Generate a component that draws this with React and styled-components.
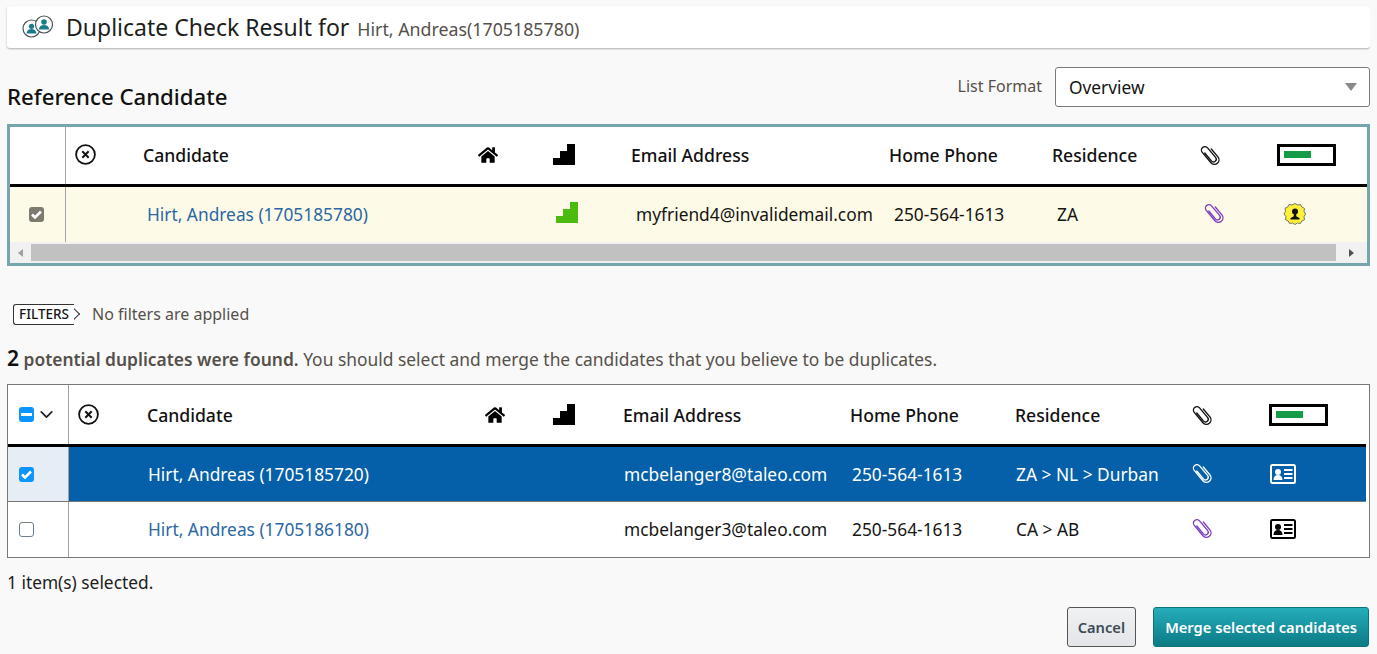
import React from 'react';
import styled, { createGlobalStyle } from 'styled-components';
import { FaHome } from 'react-icons/fa';
import { FiChevronDown } from 'react-icons/fi';

const GlobalStyle = createGlobalStyle`
  html, body {
    margin: 0;
    padding: 0;
    background: #f9f9f9;
    color: #161513;
    font-family: "Noto Sans", "Open Sans", sans-serif;
  }
`

const Page = styled.div`
  width: 1363px;
  height: 648px;
  padding: 6px 0 0 7px;
  box-sizing: content-box;
  overflow: hidden;
`
const TitleBar = styled.div`
  height: 42px;
  background: white;
  border-radius: 3px;
  box-shadow: 0 1px 2px rgba(0, 0, 0, .3);
  display: flex;
  align-items: center;
  padding-left: 14px;
`
const Title = styled.h1`
  margin: 0 0 0 12px;
  font-size: 23px;
  font-weight: 400;
  color: #201e1c;
`
const TitleName = styled.span`
  font-size: 17.8px;
  color: #55514a;
  margin-left: 8px;
`
const RefHead = styled.div`
  height: 40px;
  margin: 19px 0 17px;
  display: flex;
  align-items: flex-start;
`
const RefTitle = styled.h2`
  margin: 14px auto 0 0;
  font-size: 22.2px;
  line-height: 31px;
  font-weight: 500;
  color: #111;
`
const FormatLabel = styled.label`
  font-size: 16px;
  line-height: 38px;
  color: #55514a;
  margin-right: 13px;
`
const Select = styled.div`
  width: 315px;
  height: 40px;
  box-sizing: border-box;
  background: white;
  border: 1px solid #7a7a7a;
  border-radius: 3px;
  display: flex;
  align-items: center;
  justify-content: space-between;
  padding: 0 12px 0 13px;
  font-size: 17.33px;
  &::after {
    content: '';
    border-left: 6px solid transparent;
    border-right: 6px solid transparent;
    border-top: 8px solid #8a8a8a;
  }
`
const RefBox = styled.div`
  height: 142px;
  box-sizing: border-box;
  border: 3px solid #74a6ac;
  background: white;
`
const ListBox = styled.div`
  height: 174px;
  box-sizing: border-box;
  border: 1px solid #777;
  background: white;
  padding-right: 3px;
`
const Row = styled.div`
  display: grid;
  box-sizing: border-box;
  grid-template-columns: ${p => p.$cols};
  height: ${p => p.$h}px;
  background: ${p => p.$bg || 'white'};
  color: ${p => p.$color || '#161513'};
  border-bottom: ${p => p.$line || 'none'};
  font-size: 17.33px;
  white-space: nowrap;
  & > *:not(:first-child) {
    padding-bottom: ${p => p.$pb || 0}px;
  }
`
const Cell = styled.div`
  display: flex;
  align-items: center;
  padding-left: ${p => p.$pad || 0}px;
  margin-bottom: ${p => p.$lift || 0}px;
  min-width: 0;
`
const HeadCell = styled(Cell)`
  font-size: 17.6px;
  font-weight: 500;
  color: #111;
`
const CheckCell = styled(Cell)`
  justify-content: ${p => p.$start ? 'flex-start' : 'center'};
  gap: 2px;
  padding-left: ${p => p.$start ? 11 : 0}px;
  padding-right: ${p => p.$start ? 0 : 3}px;
  border-right: 1px solid #a3a3a3;
  background: ${p => p.$bg || 'transparent'};
`
const NameLink = styled.a`
  color: ${p => p.$light ? 'white' : '#2b68a3'};
  text-decoration: none;
`
const Check = styled.span`
  width: ${p => p.$empty ? 13 : 15}px;
  height: ${p => p.$empty ? 13 : 15}px;
  border-radius: 3px;
  border: ${p => p.$empty ? '1px solid #6f7f92' : 'none'};
  background: ${p => p.$bg || 'white'};
  display: inline-flex;
  align-items: center;
  justify-content: center;
`
const Scrollbar = styled.div`
  height: 21px;
  display: flex;
  align-items: center;
  background: #f1f1f1;
`
const ScrollBtn = styled.div`
  width: ${p => p.$w}px;
  display: flex;
  justify-content: center;
  &::before {
    content: '';
    border-top: 4px solid transparent;
    border-bottom: 4px solid transparent;
    ${p => p.$dir === 'left' ? 'border-right: 5px solid #a0a0a0;' : 'border-left: 5px solid #505050;'}
  }
`
const ScrollThumb = styled.div`
  flex: 1;
  height: 17px;
  background: #c1c1c1;
`
const FilterRow = styled.div`
  position: relative;
  z-index: 0;
  margin: 38px 0 0 6px;
  height: 21px;
  display: flex;
  align-items: center;
`
const FilterTag = styled.span`
  position: relative;
  height: 19px;
  width: 60px;
  border: 1px solid #333;
  border-right: none;
  border-radius: 3px 0 0 3px;
  background: white;
  font-size: 13.5px;
  font-weight: 500;
  line-height: 19px;
  text-align: center;
  &::after {
    content: '';
    position: absolute;
    z-index: -1;
    right: -4px;
    top: 4px;
    width: 10px;
    height: 10px;
    box-sizing: border-box;
    background: white;
    border-top: 1px solid #333;
    border-right: 1px solid #333;
    transform: rotate(45deg);
  }
`
const FilterText = styled.span`
  margin-left: 18px;
  padding-bottom: 2px;
  font-size: 16px;
  color: #55514a;
`
const Summary = styled.p`
  margin: 0;
  height: 59px;
  box-sizing: border-box;
  padding-top: 21px;
  font-size: 17.4px;
  line-height: 24px;
  color: #55514a;
  strong { font-weight: 600; }
  b { font-size: 21px; font-weight: 600; color: #111; }
`
const Selected = styled.div`
  margin-top: 13px;
  font-size: 17.33px;
  line-height: 23px;
  color: #201e1c;
`
const Actions = styled.div`
  margin: 13px 1px 0 0;
  display: flex;
  justify-content: flex-end;
  gap: 17px;
`
const Button = styled.button`
  height: 40px;
  padding: 0 ${p => p.$primary ? 11 : 10}px;
  border-radius: 3px;
  font-family: inherit;
  font-size: 14.7px;
  font-weight: 600;
  color: ${p => p.$primary ? 'white' : '#3e4a55'};
  border: 1px solid ${p => p.$primary ? '#0b7480' : '#555'};
  background: ${p => p.$primary
    ? 'linear-gradient(#25adbb, #0b7a85)'
    : 'linear-gradient(#f0f1f3, #e3e5e8)'};
`
const ClipSvg = styled.svg`
  display: block;
  width: 26px;
  height: 26px;
  margin: -3px -2px -3px -4px;
`

const PeopleIcon = () => (
  <svg width="33" height="24" viewBox="0 0 33 24" fill="none">
    <circle cx="10.5" cy="13.5" r="8.5" fill="white" stroke="#4a5258" strokeWidth="1.2" />
    <circle cx="10.5" cy="11.3" r="2.6" fill="#1a7c88" />
    <path d="M5.5 18.5c.4-3 2.2-4.4 5-4.4s4.6 1.4 5 4.4z" fill="#1a7c88" />
    <circle cx="23" cy="9.5" r="8.5" fill="white" stroke="#4a5258" strokeWidth="1.2" />
    <circle cx="23" cy="7" r="2.8" fill="#1a7c88" />
    <path d="M17.8 14.5c.4-3 2.3-4.4 5.2-4.4s4.8 1.4 5.2 4.4z" fill="#1a7c88" />
  </svg>
)

const CloseCircle = () => (
  <svg width="21" height="21" viewBox="0 0 21 21" fill="none" stroke="#111">
    <circle cx="10.5" cy="10.5" r="9.4" strokeWidth="1.8" />
    <path d="M7.3 7.3l6.4 6.4M13.7 7.3l-6.4 6.4" strokeWidth="2" />
  </svg>
)

const Steps = ({ color }) => (
  <svg width="22" height="21" viewBox="0 0 22 21" style={{ display: 'block' }}>
    <path d="M0 21v-7h7v-7h7V0h8v21z" fill={color} />
  </svg>
)

const Clip = ({ color }) => (
  <ClipSvg viewBox="0 0 24 24" fill="none" stroke={color} strokeWidth="1.25" strokeLinecap="round">
    <path
      d="M10 7.5V17a2.500 2.500 0 0 0 5 0V5.500a3.200 3.200 0 0 0-6.400 0V18a4.200 4.200 0 0 0 8.400 0V8.500"
      transform="rotate(-40 12 12) translate(-.5 0)"
    />
  </ClipSvg>
)

const Battery = () => (
  <svg width="59" height="22" viewBox="0 0 59 22" style={{ display: 'block' }}>
    <rect x="1.5" y="1.5" width="56" height="19" fill="white" stroke="#000" strokeWidth="3" />
    <rect x="7" y="7" width="27" height="7" fill="#169c48" />
  </svg>
)

const Badge = () => (
  <svg width="24" height="24" viewBox="0 0 24 24">
    <path
      d="M12 1.500l2.500 1.500 3-.5 1.300 2.500 2.700 1.300-.5 3 1.500 2.700-1.500 2.700.5 3-2.700 1.300-1.300 2.500-3-.5-2.500 1.500-2.500-1.500-3 .5-1.300-2.500-2.700-1.300.5-3L1 12l1.500-2.700-.5-3 2.700-1.300L6 2.500l3 .5z"
      fill="#fff13a" stroke="#555" strokeWidth=".8"
    />
    <circle cx="12" cy="9.5" r="3" fill="#111" />
    <path d="M11 12h2l.5 2.500 3 1.500v1.500h-9V16l3-1.500z" fill="#111" />
  </svg>
)

const IdCard = ({ fg, bg }) => (
  <svg width="26" height="20" viewBox="0 0 26 20" style={{ display: 'block' }}>
    <rect x="1" y="1" width="24" height="18" rx="1.5" fill={bg} stroke={fg} strokeWidth="2" />
    <circle cx="8" cy="8" r="3" fill={fg} />
    <path d="M3.500 16c0-3.500 1.800-5 4.500-5s4.500 1.500 4.500 5z" fill={fg} />
    <path d="M14 6h8.500M14 10h8.500M14 14h8.500" stroke={fg} strokeWidth="1.8" />
  </svg>
)

const CheckMark = ({ color }) => (
  <svg width="11" height="9" viewBox="0 0 11 9" fill="none" stroke={color} strokeWidth="2.6">
    <path d="M1 4.500l3 3 6-6" />
  </svg>
)

const refCols = '56px 77px 335px 75px 78px 258px 163px 149px 76px 1fr'
const listCols = '61px 78px 338px 68px 70px 227px 165px 178px 76px 1fr'

const refData = { name: 'Hirt, Andreas (1705185780)', email: 'myfriend4@invalidemail.com', phone: '250-564-1613', res: 'ZA' }

const duplicates = [
  { id: 1, name: 'Hirt, Andreas (1705185720)', email: 'mcbelanger8@taleo.com', phone: '250-564-1613', res: 'ZA > NL > Durban', selected: true },
  { id: 2, name: 'Hirt, Andreas (1705186180)', email: 'mcbelanger3@taleo.com', phone: '250-564-1613', res: 'CA > AB', selected: false },
]

const HeaderCells = () => (
  <>
    <Cell $pad={9}><CloseCircle /></Cell>
    <HeadCell>Candidate</HeadCell>
    <Cell><FaHome size={20} color="#000" /></Cell>
    <Cell><Steps color="#000" /></Cell>
    <HeadCell>Email Address</HeadCell>
    <HeadCell>Home Phone</HeadCell>
    <HeadCell>Residence</HeadCell>
    <Cell><Clip color="#111" /></Cell>
    <Cell><Battery /></Cell>
  </>
)

const App = () => {
  return (
    <Page>
      <GlobalStyle />
      <TitleBar>
        <PeopleIcon />
        <Title>Duplicate Check Result for<TitleName>Hirt, Andreas(1705185780)</TitleName></Title>
      </TitleBar>

      <RefHead>
        <RefTitle>Reference Candidate</RefTitle>
        <FormatLabel>List Format</FormatLabel>
        <Select>Overview</Select>
      </RefHead>

      <RefBox>
        <Row $cols={refCols} $h={60} $pb={2} $line="3px solid #000">
          <CheckCell />
          <HeaderCells />
        </Row>
        <Row $cols={refCols} $h={55} $pb={2} $bg="#fdfbe7">
          <CheckCell><Check $bg="#7f7a70"><CheckMark color="white" /></Check></CheckCell>
          <Cell />
          <Cell $pad={4}><NameLink href="#">{refData.name}</NameLink></Cell>
          <Cell />
          <Cell $pad={3} $lift={2}><Steps color="#4cbb0f" /></Cell>
          <Cell $pad={5}>{refData.email}</Cell>
          <Cell $pad={5}>{refData.phone}</Cell>
          <Cell $pad={5}>{refData.res}</Cell>
          <Cell $pad={4} $lift={2}><Clip color="#7b3fc4" /></Cell>
          <Cell $pad={6}><Badge /></Cell>
        </Row>
        <Scrollbar>
          <ScrollBtn $w={21} $dir="left" />
          <ScrollThumb />
          <ScrollBtn $w={31} $dir="right" />
        </Scrollbar>
      </RefBox>

      <FilterRow>
        <FilterTag>FILTERS</FilterTag>
        <FilterText>No filters are applied</FilterText>
      </FilterRow>

      <Summary>
        <b>2</b> <strong>potential duplicates were found.</strong> You should select and merge the candidates that you believe to be duplicates.
      </Summary>

      <ListBox>
        <Row $cols={listCols} $h={62} $line="3px solid #000">
          <CheckCell $start>
            <Check $bg="#0d95ff"><svg width="11" height="3"><rect width="11" height="3" fill="white" /></svg></Check>
            <FiChevronDown size={21} color="#222" />
          </CheckCell>
          <HeaderCells />
        </Row>
        {duplicates.map(d => (
          <Row
            key={d.id}
            $cols={listCols}
            $h={55}
            $pb={d.selected ? 1 : 2}
            $bg={d.selected ? '#0560a9' : 'white'}
            $color={d.selected ? 'white' : '#161513'}
            $line={d.selected ? '1px solid #777' : 'none'}
          >
            <CheckCell $start $bg={d.selected ? '#e6edf4' : 'white'}>
              {d.selected
                ? <Check $bg="#0d95ff"><CheckMark color="white" /></Check>
                : <Check $empty />}
            </CheckCell>
            <Cell />
            <Cell $pad={1}><NameLink href="#" $light={d.selected}>{d.name}</NameLink></Cell>
            <Cell />
            <Cell />
            <Cell $pad={1}>{d.email}</Cell>
            <Cell $pad={2}>{d.phone}</Cell>
            <Cell $pad={1}>{d.res}</Cell>
            <Cell $lift={2}><Clip color={d.selected ? 'white' : '#7b3fc4'} /></Cell>
            <Cell $pad={1}>
              <IdCard fg={d.selected ? 'white' : '#000'} bg={d.selected ? '#0560a9' : 'white'} />
            </Cell>
          </Row>
        ))}
      </ListBox>

      <Selected>1 item(s) selected.</Selected>

      <Actions>
        <Button>Cancel</Button>
        <Button $primary>Merge selected candidates</Button>
      </Actions>
    </Page>
  );
}

export default App;
